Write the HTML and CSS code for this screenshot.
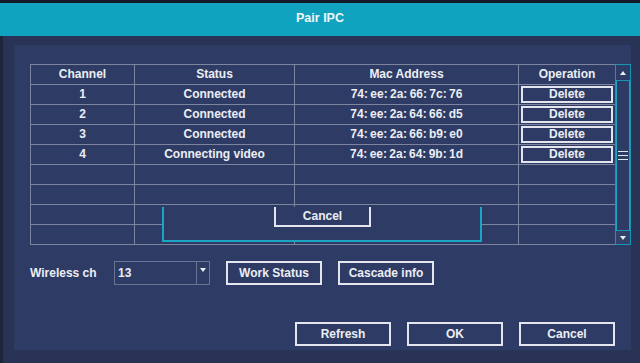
FILE: index.html
```html
<!DOCTYPE html>
<html lang="en">
<head>
    <meta charset="UTF-8">
    <meta name="viewport" content="width=device-width, initial-scale=1.0">
    <title>Pair IPC</title>
    <link rel="stylesheet" href="styles.css">
</head>
<body>
    <div class="screen">
        <div class="topline"></div>
        <div class="titlebar">Pair IPC</div>
        <div class="frame">
            <div class="panel">
                <div class="list">
                    <div class="grid">
                        <div class="cell">Channel</div>
                        <div class="cell">Status</div>
                        <div class="cell">Mac Address</div>
                        <div class="cell">Operation</div>

                        <div class="cell">1</div>
                        <div class="cell">Connected</div>
                        <div class="cell mac">74: ee: 2a: 66: 7c: 76</div>
                        <div class="cell op"><button class="btn-del">Delete</button></div>

                        <div class="cell">2</div>
                        <div class="cell">Connected</div>
                        <div class="cell mac">74: ee: 2a: 64: 66: d5</div>
                        <div class="cell op"><button class="btn-del">Delete</button></div>

                        <div class="cell">3</div>
                        <div class="cell">Connected</div>
                        <div class="cell mac">74: ee: 2a: 66: b9: e0</div>
                        <div class="cell op"><button class="btn-del">Delete</button></div>

                        <div class="cell">4</div>
                        <div class="cell">Connecting video</div>
                        <div class="cell mac">74: ee: 2a: 64: 9b: 1d</div>
                        <div class="cell op"><button class="btn-del">Delete</button></div>

                        <div class="cell"></div><div class="cell"></div><div class="cell"></div><div class="cell"></div>
                        <div class="cell"></div><div class="cell"></div><div class="cell"></div><div class="cell"></div>
                        <div class="cell"></div><div class="cell"></div><div class="cell"></div><div class="cell"></div>
                        <div class="cell"></div><div class="cell"></div><div class="cell"></div><div class="cell"></div>
                    </div>
                    <div class="scrollbar">
                        <div class="sb-btn sb-up"><span class="arrow-up"></span></div>
                        <div class="sb-track">
                            <div class="grip"><i></i><i></i><i></i></div>
                        </div>
                        <div class="sb-btn sb-down"><span class="arrow-down"></span></div>
                    </div>
                    <div class="popup">
                        <button class="popup-btn">Cancel</button>
                    </div>
                </div>

                <div class="options">
                    <span class="label">Wireless ch</span>
                    <div class="select">
                        <span class="select-value">13</span>
                        <span class="select-arrow"><span class="arrow-down"></span></span>
                    </div>
                    <button class="btn">Work Status</button>
                    <button class="btn">Cascade info</button>
                </div>

                <div class="actions">
                    <button class="btn">Refresh</button>
                    <button class="btn">OK</button>
                    <button class="btn">Cancel</button>
                </div>
            </div>
        </div>
    </div>
</body>
</html>
```

FILE: styles.css
```css
body{margin:0;padding:0;background-color:#1b2033;font-family:"Liberation Sans",Arial,sans-serif;font-weight:bold;font-size:12px;color:#eceef4;}
.screen{width:640px;height:363px;overflow:hidden;display:flex;flex-direction:column;}
.topline{height:3px;background-color:#151928;}
.titlebar{height:33px;line-height:31px;text-align:center;background-color:#10a3c0;color:#f2f6fa;font-size:12.5px;}
.frame{flex:1;background-color:#283356;border-left:3px solid #1e2439;padding:9px 9px 0 11px;}
.panel{width:617px;height:305px;background-color:#2e3c65;padding:19px 0 0 16px;box-sizing:border-box;}

.list{position:relative;display:flex;}
.grid{display:grid;grid-template-columns:103px 159px 223px 96px;grid-auto-rows:19px;gap:1px;border:1px solid #7c849f;background-color:#7c849f;}
.cell{background-color:#2e3c65;text-align:center;line-height:19px;white-space:nowrap;}
.mac{word-spacing:-1px;}
.op{text-align:left;}
.btn-del{display:block;margin:1px 0 0 2px;width:92px;height:17px;padding:0;border:2px solid #e3e6ef;background-color:#2e3c65;color:#eceef4;font:inherit;line-height:13px;}

.scrollbar{width:16px;margin-left:-1px;display:flex;flex-direction:column;border:1px solid #1597b4;box-sizing:border-box;height:181px;}
.sb-btn{display:flex;align-items:center;justify-content:center;background-color:#2e3c65;}
.sb-up{height:15px;border-bottom:1px solid #1597b4;}
.sb-down{height:13px;border-top:1px solid #1597b4;background-color:#33426b;}
.sb-track{flex:1;border-left:1px solid #1aa6c3;border-right:1px solid #1aa6c3;display:flex;flex-direction:column;justify-content:center;align-items:flex-start;}
.grip{display:flex;flex-direction:column;gap:3px;margin-left:1px;}
.grip i{display:block;width:10px;height:1px;background-color:#dfe3ee;}
.arrow-up{width:0;height:0;border-left:3px solid transparent;border-right:3px solid transparent;border-bottom:4px solid #eceef4;}
.arrow-down{width:0;height:0;border-left:3px solid transparent;border-right:3px solid transparent;border-top:4px solid #eceef4;}

.popup{position:absolute;left:132px;top:143px;width:320px;height:35px;box-sizing:border-box;background-color:#2e3c65;border:2px solid #1aa6c3;border-top:none;}
.popup-btn{display:block;margin-left:110px;width:97px;height:20px;padding:0;border:2px solid #e3e6ef;border-top:none;background-color:#2e3c65;color:#eceef4;font:inherit;line-height:16px;}

.options{display:flex;align-items:center;margin-top:16px;height:24px;}
.label{width:84px;}
.select{width:96px;height:24px;box-sizing:border-box;border:1px solid #6a7392;display:flex;margin-right:16px;}
.select-value{flex:1;padding-left:3px;line-height:22px;}
.select-arrow{width:13px;border-left:1px solid #6a7392;display:flex;justify-content:center;padding-top:6px;box-sizing:border-box;}
.btn{width:96px;height:24px;padding:0;border:2px solid #e3e6ef;background-color:#2e3c65;color:#eceef4;font:inherit;}
.options .btn{margin-right:16px;}

.actions{display:flex;justify-content:flex-end;gap:16px;margin-top:37px;padding-right:16px;}
```
